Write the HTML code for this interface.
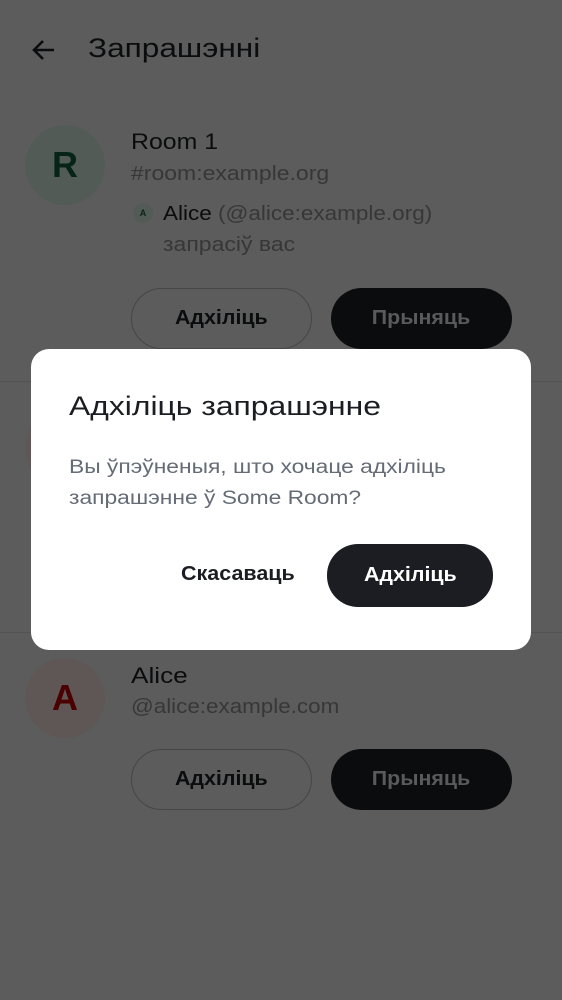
<!DOCTYPE html>
<html><head><meta charset="utf-8"><style>
*{margin:0;padding:0;box-sizing:border-box}
body{width:562px;height:1000px;background:#5c5c5c;font-family:"Liberation Sans","Noto Sans CJK SC",sans-serif;position:relative;overflow:hidden;color:#0b0c0d}
.a{position:absolute;white-space:nowrap;transform-origin:0 50%}
.btn{position:absolute;height:61px;width:181px;border-radius:31px;display:flex;align-items:center;justify-content:center;font-size:20px;font-weight:bold}
.btn span{display:inline-block;transform:scaleX(1.07)}
.o{border:1.5px solid #464646;color:#0b0c0d}
.f{background:#0b0c0d;color:#5a5a5a}
.av{position:absolute;border-radius:50%;display:flex;align-items:center;justify-content:center;font-weight:bold}
.hr{position:absolute;left:0;width:562px;height:1px;background:#535353}
</style></head><body>
<svg class="a" style="left:30px;top:38px" width="26" height="24" viewBox="0 0 26 24"><path d="M24 12H4M13 3L4 12l9 9" stroke="#0b0c0d" stroke-width="2.6" fill="none"/></svg>
<div class="a" style="left:88px;top:33px;font-size:27px;transform:scaleX(1.17)">Запрашэнні</div>

<div class="av" style="left:25px;top:125px;width:80px;height:80px;background:#535b57;color:#062518;font-size:36px">R</div>
<div class="a" style="left:131px;top:129px;font-size:22px;transform:scaleX(1.13)">Room 1</div>
<div class="a" style="left:131px;top:163px;font-size:20px;color:#373737;transform:scaleX(1.15)">#room:example.org</div>
<div class="av" style="left:133px;top:203px;width:20px;height:20px;background:#535b57;color:#062518;font-size:9px">A</div>
<div class="a" style="left:163px;top:203px;font-size:20px;color:#373737;transform:scaleX(1.125)"><b style="color:#0b0c0d;font-weight:normal">Alice</b> (@alice:example.org)</div>
<div class="a" style="left:163px;top:234px;font-size:20px;color:#373737;transform:scaleX(1.15)">запрасіў вас</div>
<div class="btn o" style="left:131px;top:288px"><span>Адхіліць</span></div>
<div class="btn f" style="left:331px;top:288px"><span>Прыняць</span></div>
<div class="hr" style="top:381px"></div>
<div class="av" style="left:25px;top:408px;width:80px;height:80px;background:#5f5755"></div>
<div class="hr" style="top:632px"></div>

<div class="av" style="left:25px;top:658px;width:80px;height:80px;background:#5f5755;color:#4a0000;font-size:36px">A</div>
<div class="a" style="left:131px;top:663px;font-size:22px;transform:scaleX(1.19)">Alice</div>
<div class="a" style="left:131px;top:696px;font-size:20px;color:#373737;transform:scaleX(1.12)">@alice:example.com</div>
<div class="btn o" style="left:131px;top:749px"><span>Адхіліць</span></div>
<div class="btn f" style="left:331px;top:749px"><span>Прыняць</span></div>

<div class="a" style="left:31px;top:349px;width:500px;height:301px;background:#fff;border-radius:18px">
<div class="a" style="left:38px;top:42px;font-size:27px;color:#1b1d22;transform:scaleX(1.18)">Адхіліць запрашэнне</div>
<div class="a" style="left:38px;top:103px;font-size:19px;line-height:31px;color:#656c76;transform:scaleX(1.2)">Вы ўпэўненыя, што хочаце адхіліць<br>запрашэнне ў Some Room?</div>
<div class="a" style="left:150px;top:214px;font-size:20px;font-weight:bold;color:#1b1d22;transform:scaleX(1.075)">Скасаваць</div>
<div class="btn" style="left:296px;top:195px;width:166px;height:63px;background:#1b1d22;color:#fff"><span>Адхіліць</span></div>
</div>
</body></html>
